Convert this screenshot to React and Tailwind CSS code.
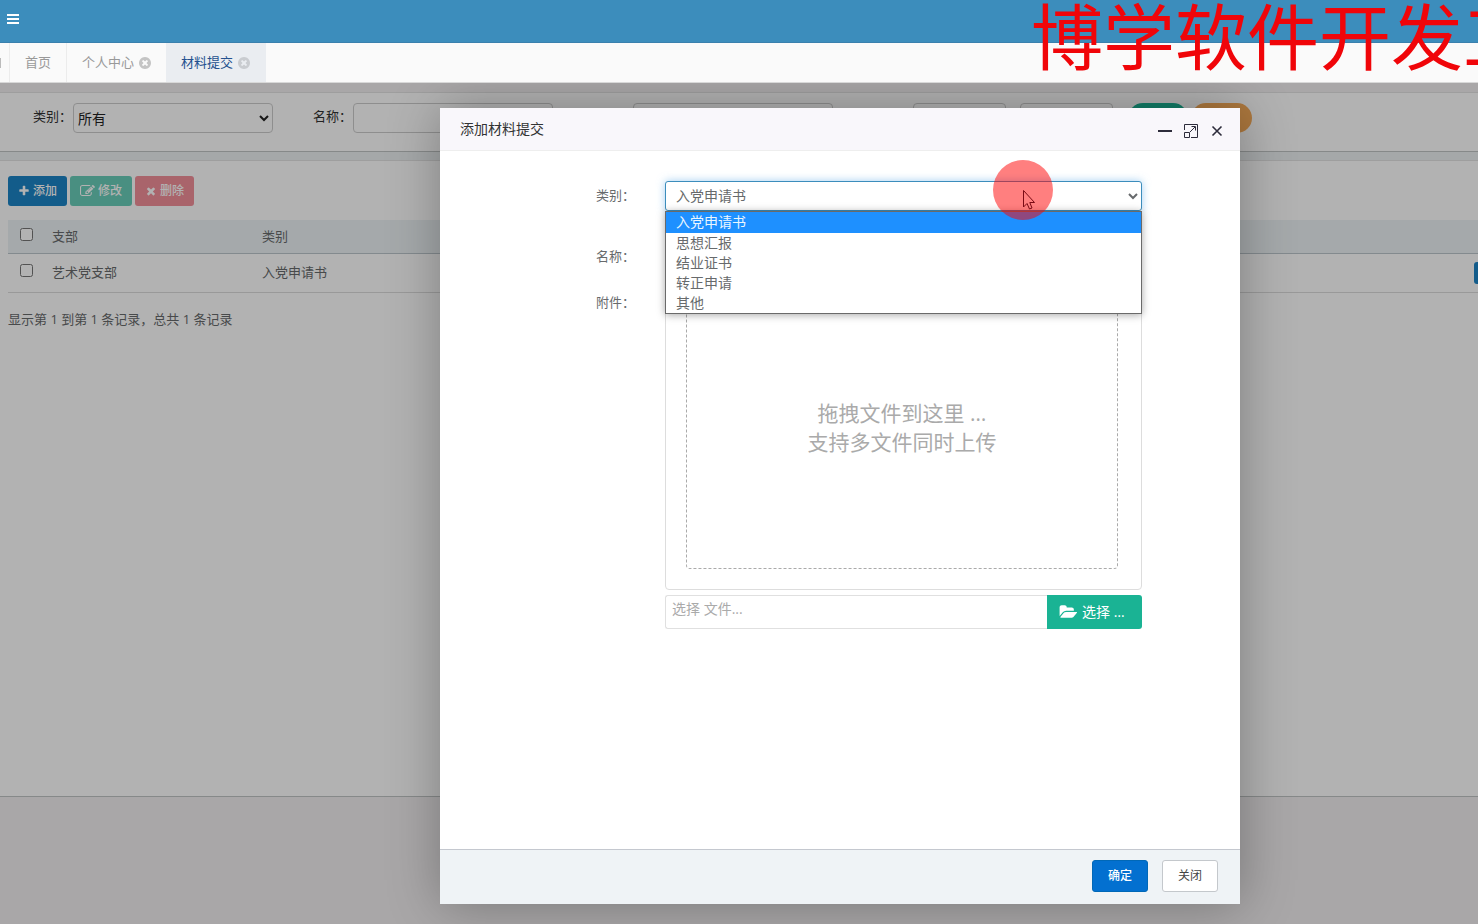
import React from "react";

const ICONS = {
  plus: "M1600 736v192q0 40-28 68t-68 28h-416v416q0 40-28 68t-68 28h-192q-40 0-68-28t-28-68v-416h-416q-40 0-68-28t-28-68v-192q0-40 28-68t68-28h416v-416q0-40 28-68t68-28h192q40 0 68 28t28 68v416h416q40 0 68 28t28 68z",
  edit: "M888 1184l116-116-152-152-116 116v56h96v96h56zm440-720q-16-16-33 1l-350 350q-17 17-1 33t33-1l350-350q17-17 1-33zm80 594v190q0 119-84.5 203.5t-203.5 84.5h-832q-119 0-203.5-84.5t-84.5-203.5v-832q0-119 84.5-203.5t203.5-84.5h832q63 0 117 25 15 7 18 23 3 17-9 29l-49 49q-14 14-32 8-23-6-45-6h-832q-66 0-113 47t-47 113v832q0 66 47 113t113 47h832q66 0 113-47t47-113v-126q0-13 9-22l64-64q15-15 35-7t20 29zm-96-738l288 288-672 672h-288v-288zm444 132l-92 92-288-288 92-92q28-28 68-28t68 28l152 152q28 28 28 68t-28 68z",
  times: "M1490 1322q0 40-28 68l-136 136q-28 28-68 28t-68-28l-294-294-294 294q-28 28-68 28t-68-28l-136-136q-28-28-28-68t28-68l294-294-294-294q-28-28-28-68t28-68l136-136q28-28 68-28t68 28l294 294 294-294q28-28 68-28t68 28l136 136q28 28 28 68t-28 68l-294 294 294 294q28 28 28 68z",
  timesCircle: "M1277 1122q0-26-19-45l-181-181 181-181q19-19 19-45 0-27-19-46l-90-90q-19-19-46-19-26 0-45 19l-181 181-181-181q-19-19-45-19-27 0-46 19l-90 90q-19 19-19 46 0 26 19 45l181 181-181 181q-19 19-19 45 0 27 19 46l90 90q19 19 46 19 26 0 45-19l181-181 181 181q19 19 45 19 27 0 46-19l90-90q19-19 19-46zm387-226q0 209-103 385.5t-279.5 279.5-385.5 103-385.5-103-279.5-279.5-103-385.5 103-385.5 279.5-279.5 385.5-103 385.5 103 279.5 279.5 103 385.5z",
  folder: "M1943 952q0 31-31 66l-336 396q-43 51-120.5 86.5t-143.5 35.5h-1088q-34 0-60.5-13t-26.5-43q0-31 31-66l336-396q43-51 120.5-86.5t143.5-35.5h1088q34 0 60.5 13t26.5 43zm-343-344v160h-832q-94 0-197 47.5t-164 119.5l-337 396-5 6q0-4-.5-12.5t-.5-12.5v-960q0-92 66-158t158-66h320q92 0 158 66t66 158v32h544q92 0 158 66t66 158z",
};

function Icon({ name, wide = false, className }) {
  return (
    <svg viewBox={wide ? "0 0 2048 1792" : "0 0 1792 1792"} className={className} fill="currentColor" preserveAspectRatio="none" aria-hidden="true">
      <path d={ICONS[name]} />
    </svg>
  );
}

function TopBar() {
  return (
    <header className="flex h-[43px] items-start border-b border-[#3a80ad] bg-[#3c8dbc] px-1.5 pt-3">
      <button type="button" aria-label="菜单" className="text-white">
        <svg viewBox="0 0 14 14" className="size-3.5" fill="currentColor" aria-hidden="true">
          <rect x="1" y="2" width="12" height="2" />
          <rect x="1" y="6" width="12" height="2" />
          <rect x="1" y="10" width="12" height="2" />
        </svg>
      </button>
    </header>
  );
}

function TabBar() {
  return (
    <nav className="flex h-10 items-stretch border-b border-[#d8d8d8] bg-[#fafafa] text-[#999]">
      <div className="flex w-2.5 items-center border-r border-[#ececec]">
        <span className="h-2.5 w-px bg-[#bbb]" />
      </div>
      <a href="#home" className="flex items-center border-r border-[#ececec] px-[15px]">首页</a>
      <a href="#profile" className="flex items-center gap-1 pr-[14px] pl-[15px]">
        个人中心
        <Icon name="timesCircle" className="size-3.5 text-[#c4c4c4]" />
      </a>
      <a href="#materials" className="flex items-center gap-1 bg-[#eaedf1] px-[15px] text-[#23508e]">
        材料提交
        <Icon name="timesCircle" className="size-3.5 text-[#c9ccd0]" />
      </a>
    </nav>
  );
}

const field = "h-[30px] rounded border border-[#ccc] bg-white text-sm text-[#222]";

function SearchPanel() {
  return (
    <form className="flex h-[60px] items-start overflow-hidden border-y border-[#e2e2e2] border-b-[#c0c4c5] bg-white pt-2.5 pl-[33px] whitespace-nowrap text-[#333]">
      <div className="mr-10 flex shrink-0">
        <label htmlFor="q-type" className="w-10 leading-[26px]">类别：</label>
        <select id="q-type" className={field + " w-[200px]"}>
          <option>所有</option>
        </select>
      </div>
      <div className="mr-10 flex shrink-0">
        <label htmlFor="q-name" className="w-10 leading-[26px]">名称：</label>
        <input id="q-name" type="text" className={field + " w-[200px]"} />
      </div>
      <div className="mr-10 ml-10 shrink-0">
        <input type="text" aria-label="支部" className={field + " w-[200px]"} />
      </div>
      <div className="mr-[15px] ml-10 flex shrink-0 gap-[14px]">
        <input type="text" aria-label="开始时间" className={field + " w-[93px]"} />
        <input type="text" aria-label="结束时间" className={field + " w-[93px]"} />
      </div>
      <div className="flex shrink-0 gap-[3px] text-xs text-white">
        <button type="button" className="h-[30px] w-[60px] rounded-full bg-[#1ab394]">搜索</button>
        <button type="button" className="h-[30px] w-[61px] rounded-full bg-[#f8ac59] pl-3">重置</button>
      </div>
    </form>
  );
}

const tool = "flex h-[30px] items-center gap-[3px] rounded-[3px] px-2.5 text-xs font-medium text-white";

function TablePanel() {
  return (
    <section className="h-[637px] overflow-hidden border-t border-b border-t-[#e2e2e2] border-b-[#c0c4c5] bg-white pt-[15px] pl-2 text-[#676a6c]">
      <div className="flex gap-[3px]">
        <button type="button" className={tool + " bg-[#1c84c6]"}>
          <Icon name="plus" className="size-3" />
          添加
        </button>
        <button type="button" disabled className={tool + " bg-[#1ab394] opacity-65"}>
          <Icon name="edit" className="h-3.5 w-[15px]" />
          修改
        </button>
        <button type="button" disabled className={tool + " bg-[#ed5565] opacity-65"}>
          <Icon name="times" className="size-3" />
          删除
        </button>
      </div>
      <table className="mt-3.5 w-[1664px] table-fixed border-collapse text-left">
        <colgroup>
          <col className="w-9" />
          <col className="w-[210px]" />
          <col />
          <col className="w-[206px]" />
        </colgroup>
        <thead>
          <tr className="h-[33px] border-b border-[#bcc6cc] bg-[#ecf2f5]">
            <th className="pl-3 font-normal">
              <input type="checkbox" aria-label="全选" className="mb-1 block size-[13px]" />
            </th>
            <th className="px-2 font-normal">支部</th>
            <th className="px-2 font-normal">类别</th>
            <th />
          </tr>
        </thead>
        <tbody>
          <tr className="h-[39px] border-b border-[#dcdcdc]">
            <td className="pl-3">
              <input type="checkbox" aria-label="选择记录" className="mb-1 block size-[13px]" />
            </td>
            <td className="px-2">艺术党支部</td>
            <td className="px-2">入党申请书</td>
            <td className="px-2">
              <button type="button" className="block h-[22px] rounded-[3px] bg-[#1c84c6] px-1.5 text-xs text-white">下载</button>
            </td>
          </tr>
        </tbody>
      </table>
      <p className="mt-4 leading-5">显示第 1 到第 1 条记录，总共 1 条记录</p>
    </section>
  );
}

const OPTIONS = ["入党申请书", "思想汇报", "结业证书", "转正申请", "其他"];

function TypeSelect() {
  return (
    <div className="relative min-w-0 flex-1">
      <select
        id="m-type"
        className="block h-[30px] w-full rounded-[3px] border border-[#3c8dbc] bg-white px-1.5 pb-0.5 text-sm text-[#676a6c] shadow-[0_0_8px_rgba(102,175,233,0.6)] outline-none"
      >
        {OPTIONS.map((o) => (
          <option key={o}>{o}</option>
        ))}
      </select>
      <ul className="absolute inset-x-0 top-[30px] z-10 border border-[#6a6a6a] bg-white text-sm leading-5 shadow-[0_1px_8px_rgba(0,0,0,0.35)]">
        {OPTIONS.map((o, i) => (
          <li key={o} className={i === 0 ? "bg-[#1e90ff] px-2.5 pb-px text-[#eaf6ff]" : "px-2.5"}>
            {o}
          </li>
        ))}
      </ul>
    </div>
  );
}

const row = "flex gap-[30px]";
const rowLabel = "w-[195px] shrink-0 text-right leading-7";

function Modal() {
  return (
    <div role="dialog" aria-label="添加材料提交" className="flex w-[800px] flex-col bg-white text-[#676a6c] shadow-[1px_1px_50px_rgba(0,0,0,0.3)]">
      <div className="flex h-[43px] items-center justify-between border-b border-[#eee] bg-[#f9f7fb] pr-[15px] pl-5">
        <h2 className="text-sm text-[#333]">添加材料提交</h2>
        <div className="flex items-center gap-2.5 pt-1 text-[#2d2c3b]">
          <button type="button" aria-label="最小化">
            <svg viewBox="0 0 16 16" className="size-4" aria-hidden="true">
              <rect x="1" y="7" width="14" height="2" fill="currentColor" />
            </svg>
          </button>
          <button type="button" aria-label="最大化">
            <svg viewBox="0 0 16 16" className="size-4" fill="none" stroke="currentColor" aria-hidden="true">
              <path d="M1.5 7V1.5H14.5V14.5H8" />
              <path d="M1.5 9.5H6.5V14.5H1.5Z" />
              <path d="M7 9L12 4M8.5 3.5H12.5V7.5" />
            </svg>
          </button>
          <button type="button" aria-label="关闭窗口">
            <svg viewBox="0 0 16 16" className="size-4" fill="none" stroke="currentColor" strokeWidth="1.6" aria-hidden="true">
              <path d="M3.5 3.5L12.5 12.5M12.5 3.5L3.5 12.5" />
            </svg>
          </button>
        </div>
      </div>

      <form className="flex-1 pt-[30px] pr-[98px]">
        <div className={row + " mb-[31px]"}>
          <label htmlFor="m-type" className={rowLabel}>类别：</label>
          <TypeSelect />
        </div>
        <div className={row + " mb-4"}>
          <label htmlFor="m-name" className={rowLabel}>名称：</label>
          <input id="m-name" type="text" className="h-[30px] min-w-0 flex-1 rounded border border-[#ddd] px-2.5" />
        </div>
        <div className={row}>
          <label htmlFor="m-file" className={rowLabel}>附件：</label>
          <div className="min-w-0 flex-1">
            <div className="rounded border border-[#ddd] pt-5 pr-[23px] pb-5 pl-5">
              <div className="h-[260px] rounded border border-dashed border-[#aaa] pt-[89px] text-center text-[21px] leading-[29px] text-[#aaa]">
                拖拽文件到这里 …
                <br />
                支持多文件同时上传
              </div>
            </div>
            <div className="mt-[5px] flex h-[34px]">
              <input
                id="m-file"
                type="text"
                readOnly
                placeholder="选择 文件..."
                className="min-w-0 flex-1 rounded-l-[3px] border border-r-0 border-[#e0e0e0] px-1.5 pb-1.5 text-sm placeholder:text-[#aaa]"
              />
              <button type="button" className="flex w-[95px] items-center gap-1 rounded-r-[3px] bg-[#1ab394] pl-3 text-sm text-white">
                <Icon name="folder" wide className="h-4 w-[19px]" />
                选择 …
              </button>
            </div>
          </div>
        </div>
      </form>

      <div className="flex h-[55px] items-start justify-end gap-3.5 border-t border-[#c4c8cf] bg-[#eff3f6] pt-2.5 pr-[22px] text-xs">
        <button type="button" className="h-8 w-14 rounded-[3px] border border-[#0168b7] bg-[#0370d0] font-medium text-white">确定</button>
        <button type="button" className="h-8 w-14 rounded-[3px] border border-[#c4c8cc] bg-white text-[#444]">关闭</button>
      </div>
    </div>
  );
}

function Pointer() {
  return (
    <div className="pointer-events-none absolute top-[160px] left-[993px] z-30 size-[60px] rounded-full bg-[#ff0000]/50">
      <svg viewBox="0 0 60 60" className="size-[60px]" fill="none" stroke="#7a0a14" aria-hidden="true">
        <path d="M30.500 30.500V47L34 43.500L36.500 49L39 48L36.800 42.500H41.500Z" />
      </svg>
    </div>
  );
}

export default function App() {
  return (
    <div className="relative flex min-h-screen flex-col overflow-hidden bg-white font-['Open_Sans','Noto_Sans_CJK_SC',sans-serif] text-[13px]">
      <TopBar />
      <TabBar />
      <main className="relative flex-1 overflow-hidden bg-[#f2eff1] pt-[9px]">
        <SearchPanel />
        <div className="h-2 bg-[#edf1f2]" />
        <TablePanel />
        <div className="absolute inset-0 z-10 flex justify-center bg-black/30 pt-[25px] pb-5 pl-[202px]">
          <Modal />
        </div>
      </main>
      <div className="pointer-events-none absolute top-0 left-[1031px] z-20 text-[72px] leading-[72px] whitespace-nowrap text-[#f00509]">博学软件开发工作室</div>
      <Pointer />
    </div>
  );
}
